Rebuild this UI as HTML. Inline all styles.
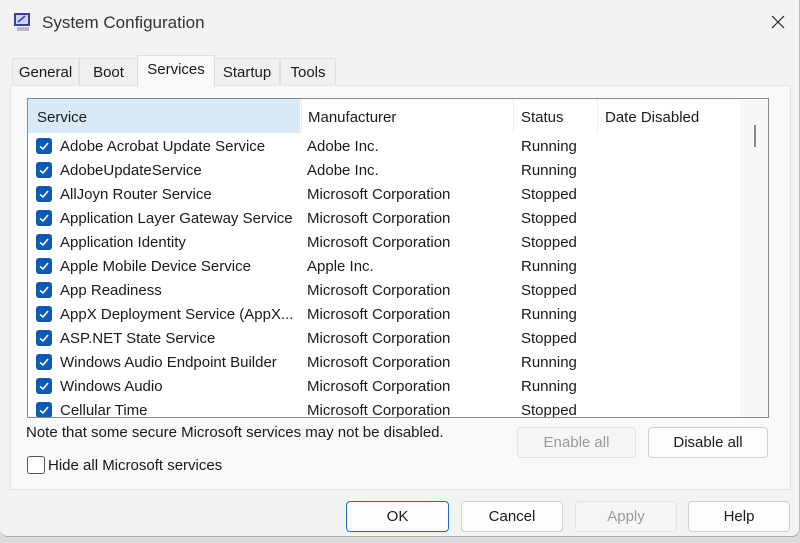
<!DOCTYPE html>
<html><head><style>
body{margin:0;width:800px;height:543px;background:#dcdcdc;font-family:"Liberation Sans",sans-serif;font-size:15px;color:#1a1a1a;overflow:hidden;position:relative}
.win{position:absolute;left:0;top:0;width:799px;height:536px;background:#f3f3f3;border-right:1px solid #bbb;border-bottom:1px solid #aaa;border-radius:0 0 8px 8px}
.a{position:absolute;white-space:nowrap}
.tab{position:absolute;top:58px;height:27px;background:#f0f0f0;border:1px solid #e0e0e0;border-bottom:none;line-height:27px;text-align:center}
.panel{position:absolute;left:10px;top:85px;width:779px;height:403px;background:#f9f9f9;border:1px solid #e5e5e5}
.list{position:absolute;left:27px;top:98px;width:740px;height:318px;background:#fff;border:1px solid #8a8a8a;overflow:hidden}
.row{position:absolute;left:0;height:24px;line-height:24px;width:712px}
.cb{position:absolute;left:8px;top:4px;width:16px;height:16px;background:#0a5cb8;border-radius:3px}
.cb svg{position:absolute;left:2px;top:2px}
.btn{position:absolute;height:29px;line-height:29px;text-align:center;background:#fdfdfd;border:1px solid #d0d0d0;border-radius:4px}
</style></head><body>
<div class="win">
<svg class="a" style="left:13px;top:12px" width="20" height="22" viewBox="0 0 20 22"><rect x="1" y="1" width="16" height="13" fill="#3a3f9a"/><rect x="3" y="3" width="12" height="9" fill="#c9d6ef"/><path d="M5 10 L12 4" stroke="#3a3f9a" stroke-width="1.5"/><rect x="4" y="15" width="12" height="4" fill="#b8b8c8"/></svg>
<div class="a" style="left:42px;top:13px;font-size:17px;color:#333">System Configuration</div>
<svg class="a" style="left:771px;top:15px" width="14" height="14" viewBox="0 0 14 14"><path d="M1 1L13 13M13 1L1 13" stroke="#222" stroke-width="1.2"/></svg>
<div class="tab" style="left:12px;width:65px">General</div>
<div class="tab" style="left:79px;width:57px">Boot</div>
<div class="tab" style="left:214px;width:64px">Startup</div>
<div class="tab" style="left:280px;width:54px">Tools</div>
<div class="panel"></div>
<div class="tab" style="left:137px;width:76px;top:55px;height:31px;background:#f9f9f9;line-height:28px;z-index:2">Services</div>
<div class="list">
<div class="a" style="left:0;top:0;width:272px;height:34px;background:#d9eaf7"></div>
<div class="a" style="left:273px;top:0;width:1px;height:34px;background:#eee"></div>
<div class="a" style="left:485px;top:0;width:1px;height:34px;background:#eee"></div>
<div class="a" style="left:569px;top:0;width:1px;height:34px;background:#eee"></div>
<div class="a" style="left:712px;top:0;width:28px;height:318px;background:#f8f8f8"></div>
<div class="a" style="left:726px;top:26px;width:2px;height:22px;background:#888"></div>
<div class="a" style="left:9px;top:10px">Service</div>
<div class="a" style="left:280px;top:10px">Manufacturer</div>
<div class="a" style="left:493px;top:10px">Status</div>
<div class="a" style="left:577px;top:10px">Date Disabled</div>
<div id="rows"></div>
</div>
<div class="a" style="left:26px;top:424px">Note that some secure Microsoft services may not be disabled.</div>
<div class="btn" style="left:517px;top:427px;width:117px;color:#9a9a9a;background:#f6f6f6;border-color:#e3e3e3">Enable all</div>
<div class="btn" style="left:648px;top:427px;width:118px">Disable all</div>
<div class="a" style="left:27px;top:456px;width:16px;height:16px;border:1px solid #555;border-radius:3px;background:#fff"></div>
<div class="a" style="left:48px;top:457px">Hide all Microsoft services</div>
<div class="btn" style="left:346px;top:501px;width:101px;border-color:#1a6fc0">OK</div>
<div class="btn" style="left:461px;top:501px;width:100px">Cancel</div>
<div class="btn" style="left:575px;top:501px;width:100px;color:#9a9a9a;background:#f6f6f6;border-color:#e3e3e3">Apply</div>
<div class="btn" style="left:688px;top:501px;width:100px">Help</div>
</div>
<script>
var d=[["Adobe Acrobat Update Service","Adobe Inc.","Running"],["AdobeUpdateService","Adobe Inc.","Running"],["AllJoyn Router Service","Microsoft Corporation","Stopped"],["Application Layer Gateway Service","Microsoft Corporation","Stopped"],["Application Identity","Microsoft Corporation","Stopped"],["Apple Mobile Device Service","Apple Inc.","Running"],["App Readiness","Microsoft Corporation","Stopped"],["AppX Deployment Service (AppX...","Microsoft Corporation","Running"],["ASP.NET State Service","Microsoft Corporation","Stopped"],["Windows Audio Endpoint Builder","Microsoft Corporation","Running"],["Windows Audio","Microsoft Corporation","Running"],["Cellular Time","Microsoft Corporation","Stopped"]];
var h="";d.forEach(function(r,i){h+='<div class="row" style="top:'+(36+i*24)+'px"><div class="cb" style="top:3px"><svg width="12" height="12" viewBox="0 0 12 12"><path d="M2 6.5 L5 9 L10 3" stroke="#fff" stroke-width="1.5" fill="none"/></svg></div><span class="a" style="left:32px">'+r[0]+'</span><span class="a" style="left:279px">'+r[1]+'</span><span class="a" style="left:493px">'+r[2]+'</span></div>'});
document.getElementById("rows").innerHTML=h;
</script>
</body></html>
